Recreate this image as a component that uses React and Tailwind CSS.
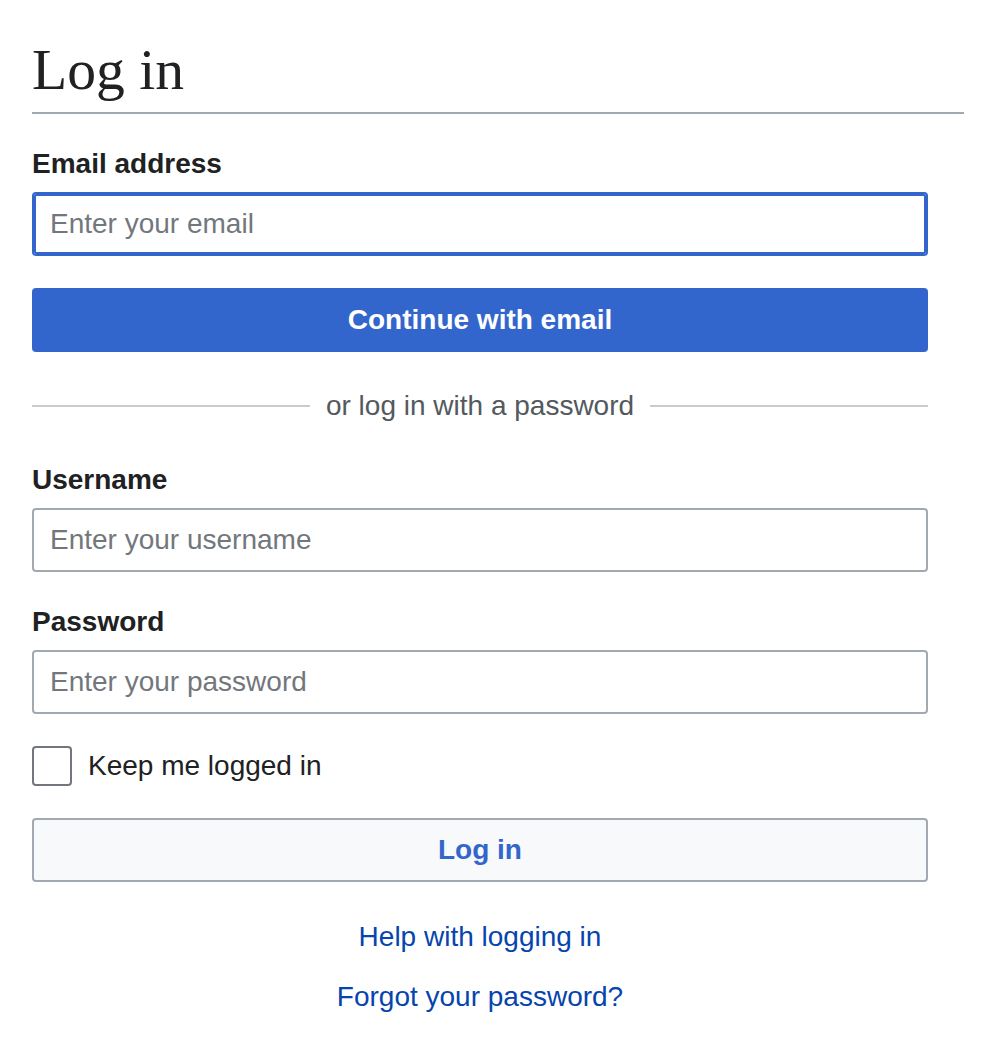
import React, { useState } from "react";

/**
 * Login page — email first, then username/password as a fallback.
 */
export default function App() {
  const [form, setForm] = useState({ email: "", username: "", password: "" });
  const [remember, setRemember] = useState(false);

  const handleChange = (e) => {
    setForm((f) => ({ ...f, [e.target.name]: e.target.value }));
  };

  return (
    <div
      className="min-h-screen bg-white px-8 text-[28px] text-[#202122]"
      style={{ fontFamily: '"Liberation Sans", Arial, sans-serif' }}
    >
      {/* Title */}
      <h1
        className="mt-[34px] border-b-2 border-[#a2a9b1] pb-[6px] text-[57.6px] leading-[72px] font-normal text-[#202122]"
        style={{ fontFamily: '"Liberation Serif", "Times New Roman", serif' }}
      >
        Log in
      </h1>

      <form
        className="w-[896px]"
        onSubmit={(e) => e.preventDefault()}
      >
        {/* Email */}
        <label className="mt-[34px] mb-3 block font-bold leading-[32px]">
          Email address
        </label>
        <input
          name="email"
          type="email"
          autoFocus
          value={form.email}
          onChange={handleChange}
          placeholder="Enter your email"
          className="block h-16 w-full rounded-[4px] border-2 border-[#36c] px-4 text-[28px] text-[#202122] shadow-[inset_0_0_0_2px_#36c] outline-none placeholder:text-[#72777d]"
        />

        <button
          type="submit"
          className="mt-8 block h-16 w-full rounded-[4px] bg-[#36c] font-bold text-white"
        >
          Continue with email
        </button>

        {/* Divider */}
        <div className="mt-[38px] flex items-center gap-4 leading-[32px] text-[#54595d]">
          <div className="h-[2px] flex-1 bg-[#c8ccd1]" />
          <span>or log in with a password</span>
          <div className="h-[2px] flex-1 bg-[#c8ccd1]" />
        </div>

        {/* Username */}
        <label className="mt-[42px] mb-3 block font-bold leading-[32px]">
          Username
        </label>
        <input
          name="username"
          type="text"
          value={form.username}
          onChange={handleChange}
          placeholder="Enter your username"
          className="block h-16 w-full rounded-[4px] border-2 border-[#a2a9b1] px-4 text-[28px] text-[#202122] outline-none placeholder:text-[#72777d]"
        />

        {/* Password */}
        <label className="mt-[34px] mb-3 block font-bold leading-[32px]">
          Password
        </label>
        <input
          name="password"
          type="password"
          value={form.password}
          onChange={handleChange}
          placeholder="Enter your password"
          className="block h-16 w-full rounded-[4px] border-2 border-[#a2a9b1] px-4 text-[28px] text-[#202122] outline-none placeholder:text-[#72777d]"
        />

        {/* Remember me */}
        <label className="mt-8 flex cursor-pointer items-center gap-4 leading-[32px]">
          <input
            type="checkbox"
            checked={remember}
            onChange={(e) => setRemember(e.target.checked)}
            className="h-10 w-10 shrink-0 cursor-pointer appearance-none rounded-[4px] border-2 border-[#72777d] bg-white checked:border-[#36c] checked:bg-[#36c]"
          />
          Keep me logged in
        </label>

        <button
          type="submit"
          className="mt-8 block h-16 w-full rounded-[4px] border-2 border-[#a2a9b1] bg-[#f8f9fa] font-bold text-[#36c]"
        >
          Log in
        </button>

        {/* Help links */}
        <div className="mt-[39px] flex flex-col items-center gap-7 leading-[32px]">
          <a href="#" className="text-[#0645ad]">
            Help with logging in
          </a>
          <a href="#" className="text-[#0645ad]">
            Forgot your password?
          </a>
        </div>
      </form>
    </div>
  );
}
